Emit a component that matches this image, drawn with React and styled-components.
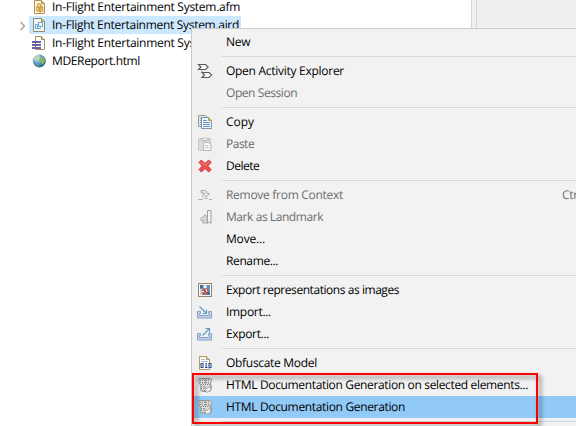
import React from 'react';
import styled, { createGlobalStyle } from 'styled-components';

const Global = createGlobalStyle`
  * { box-sizing: border-box; }
  body { margin: 0; overflow: hidden; }
`;

const Window = styled.div`
  position: relative;
  display: flex;
  width: 576px;
  height: 426px;
  overflow: hidden;
  background: #fff;
  color: #000;
  font: 12px/18px 'Open Sans', sans-serif;
  text-rendering: geometricPrecision;
`;

const Explorer = styled.div`
  width: 471px;
  margin-top: -2px;
`;

const Sash = styled.div`
  width: 6px;
  background: #f0f0f0;
  border: solid #d5d5d5;
  border-width: 0 1px;
`;

const Editor = styled.div`
  flex: 1;
  background: #efefef;
`;

const TreeRow = styled.div`
  display: flex;
  align-items: center;
  height: 18px;
  padding-left: 16px;
`;

const Twisty = styled.svg`
  width: 13px;
  height: 16px;
  flex: none;
`;

const TreeItem = styled.div`
  display: flex;
  align-items: center;
  height: 18px;
  padding: 0 2px;
  background: ${(p) => (p.$selected ? '#cce8ff' : 'transparent')};
`;

const Icon = styled.svg`
  display: block;
  flex: none;
  width: 16px;
  height: 16px;
`;

const Label = styled.span`
  display: block;
  white-space: nowrap;
  letter-spacing: ${(p) => p.$tracking}px;
`;

const TreeLabel = styled(Label)`
  margin-left: 5px;
`;

const Menu = styled.div`
  position: absolute;
  left: 191px;
  top: 28px;
  width: 420px;
  height: 420px;
  padding-top: 2px;
  background: linear-gradient(90deg, #f0f0f0 30px, #f2f2f2 30px);
  border: solid #cacaca;
  border-width: 1px 0 0 1px;
`;

const MenuRow = styled.div`
  display: flex;
  align-items: center;
  height: 22px;
  padding-left: 5px;
  color: ${(p) => (p.$disabled ? '#6d6d6d' : '#000')};
  background: ${(p) => (p.$active ? '#91c9f7' : 'transparent')};
`;

const IconSlot = styled.div`
  width: 29px;
  height: 16px;
`;

const Shortcut = styled(Label)`
  width: 49px;
  margin-left: auto;
`;

const Separator = styled.div`
  height: 7px;
  margin-left: 30px;
  padding-top: 3px;

  &::before {
    content: '';
    display: block;
    height: 1px;
    background: #d7d7d7;
  }
`;

const Callout = styled.div`
  position: absolute;
  left: 192px;
  top: 373px;
  width: 346px;
  height: 51px;
  border: 2px solid #fe0000;
  filter: drop-shadow(3px 3px 2px rgba(0, 0, 0, 0.5));
`;

const AfmIcon = () => (
  <Icon viewBox="0 0 16 16">
    <path d="M3.500 1.500h7l3 3v10h-10z" fill="#fff6e0" stroke="#b0935a" />
    <path d="M10.500 1.500v3h3" fill="#e8cf8c" stroke="#a88a48" />
    <path d="M5 8l2-4 3 1 2 3v4l-3 1.500-4-1.500z" fill="#dba950" />
    <circle cx="8" cy="6.500" r="1.500" fill="#f9e4b0" stroke="#bb8a3c" strokeWidth=".6" />
    <circle cx="6.700" cy="10" r="1.500" fill="#f6d896" stroke="#bb8a3c" strokeWidth=".6" />
    <path d="M9 9l3-1v4l-3 1z" fill="#e9bd69" stroke="#bb8a3c" strokeWidth=".6" />
  </Icon>
);

const AirdIcon = () => (
  <Icon viewBox="0 0 16 16">
    <path d="M2.500 1.500h8l3 3v10h-11z" fill="#eef7fd" stroke="#8f8a6c" />
    <path d="M10.500 1.500v3h3" fill="#e6c77b" stroke="#a68b4f" />
    <path d="M7.500 5.500h4v4h-4zM4.500 7.500h2v4h3v-1M4.500 7.500v4h3" fill="none" stroke="#6aa5c9" />
  </Icon>
);

const ModelIcon = () => (
  <Icon viewBox="0 0 16 16">
    <path d="M4.500 1.500h6l3 3v10h-9z" fill="#f8fbff" stroke="#a68b5b" />
    <path d="M10.500 1.500v3h3" fill="#e8cc86" stroke="#a68b4f" />
    <path d="M1 7h9M1 10h9M1 13h9" stroke="#6b60a6" strokeWidth="2" />
  </Icon>
);

const GlobeIcon = () => (
  <Icon viewBox="0 0 16 16">
    <defs>
      <radialGradient id="sea" cx=".35" cy=".3" r=".8">
        <stop offset="0" stopColor="#d3ebf7" />
        <stop offset=".5" stopColor="#5a9dca" />
        <stop offset="1" stopColor="#1b4e82" />
      </radialGradient>
    </defs>
    <circle cx="8.300" cy="8" r="6.500" fill="url(#sea)" />
    <path d="M3 5l3-3 3 .5-1 2-2 1.500-1 2-2-.5z" fill="#bcd5a2" />
    <path d="M9 5l3-1.500 2 3-1 3.500-2 1.500-1-3-2-1z" fill="#8fb562" />
    <path d="M4 9.500l3 1 .5 3-2.500-1z" fill="#69a37a" />
  </Icon>
);

const ActivityIcon = () => (
  <Icon viewBox="0 0 16 16">
    <path
      d="M1.500 1.500H8.500L11.200 4 8.500 6.500H1.500L4 4zM5 9.500H12L14.700 12 12 14.500H5L7.500 12z"
      fill="#fafafa"
      stroke="#595959"
      strokeWidth="1.100"
    />
    <path d="M5 6.500v3" stroke="#999" />
  </Icon>
);

const CopyIcon = () => (
  <Icon viewBox="0 0 16 16">
    <path d="M1.500 1.500h7l2 2v9h-9z" fill="#d9e8f3" stroke="#a39b78" />
    <path d="M3 4.500h2M3 6.500h2M3 8.500h2M3 10.500h2" stroke="#7fa3c8" />
    <path d="M4.500 3.500h7l3 3v8h-10z" fill="#eff7ff" stroke="#7895b1" />
    <path d="M11.500 3.500v3h3" fill="#e7c36e" stroke="#b89243" />
    <path d="M6 6.500h4M6 8.500h7M6 10.500h7M6 12.500h7" stroke="#6a93bf" />
  </Icon>
);

const PasteIcon = () => (
  <Icon viewBox="0 0 16 16">
    <rect x="1.500" y="2.500" width="12" height="12" rx="1" fill="#dcdcdc" stroke="#c4c4c4" />
    <path d="M4.500 4.500v-2h2l1-1h1l1 1h2v2z" fill="#eee" stroke="#b8b8b8" />
    <path d="M6.500 6.500h5l2.500 2v6H6.500z" fill="#f6f6f6" stroke="#b8b8b8" />
    <path d="M8 9.500h3M8 11.500h4" stroke="#c6c6c6" />
  </Icon>
);

const DeleteIcon = () => (
  <Icon viewBox="0 0 16 16">
    <path
      d="M2 4.500L4.300 2 8 5.500 11.700 2 14.200 4.500 10.700 8l3.500 3.500-2.500 2.500L8 10.500 4.300 14 2 11.500 5.300 8z"
      fill="#eb4c4c"
      stroke="#d23b40"
      strokeLinejoin="round"
    />
    <path d="M3.500 4.300l4.500 3L12.500 4" fill="none" stroke="#f58a80" />
  </Icon>
);

const RemoveContextIcon = () => (
  <Icon viewBox="0 0 16 16">
    <path
      d="M4 3.500h3.500q2.500 0 2.500 3h2.500L9 10.500 5.500 6.800h2Q7.500 5.500 4 5.500z"
      fill="#e6e6e6"
      stroke="#adadad"
    />
    <path d="M4.500 8.500l2 2" stroke="#adadad" />
    <path d="M1 12.500h5M12 12.500h3" stroke="#adadad" />
    <path d="M7 11.500h4" stroke="#c4c4c4" />
  </Icon>
);

const LandmarkIcon = () => (
  <Icon viewBox="0 0 16 16">
    <path d="M10.500 1.500h3.500v13l-1.700-2-1.800 2z" fill="#f6f6f6" stroke="#9f9f9f" />
    <path
      d="M4.500 8.500l3-1V5.500l2.500 2v6.500H5.500v-1.500l2-1.500-3 .5L3 10.500z"
      fill="#dedede"
      stroke="#adadad"
    />
  </Icon>
);

const ImageIcon = () => (
  <Icon viewBox="0 0 16 16">
    <rect x="1.500" y="1.500" width="13" height="13" fill="#fff8ec" stroke="#98836c" />
    <path d="M3 3h10v10H3z" fill="#5b94ca" />
    <path d="M3 3h4v3H3zM10 10h3v3h-3z" fill="#3c6ea8" />
    <path d="M3 7h3v6H3z" fill="#b9cfe2" />
    <path d="M5 8l2-2 3 .5 2 2-1 1.500-1-1 .5 4H9l-1-3-1 3H5.500z" fill="#bf5245" />
    <circle cx="8" cy="4.700" r="1.700" fill="#fff" />
    <path d="M9 7l1 3M5 9.500h2" stroke="#eef4f9" />
  </Icon>
);

const Tray = () => (
  <path
    d="M.500 7.500h3v2h-1v2h10v-2h-1v-2h3v6.500H.500z"
    fill="#c3d2e7"
    stroke="#86a0c8"
  />
);

const ImportIcon = () => (
  <Icon viewBox="0 0 16 16">
    <Tray />
    <path d="M2.500 2.500l7 7M9.500 5.500v4h-4" fill="none" stroke="#5d9cc7" strokeWidth="1.200" />
  </Icon>
);

const ExportIcon = () => (
  <Icon viewBox="0 0 16 16">
    <Tray />
    <path d="M5.500 9.500l7-7M8.500 2.500h4v4" fill="none" stroke="#5d9cc7" strokeWidth="1.200" />
  </Icon>
);

const ObfuscateIcon = () => (
  <Icon viewBox="0 0 16 16">
    <path d="M2.500 1.500h7l3 3v10h-10z" fill="#f9fbff" stroke="#b09a5c" />
    <path d="M9.500 1.500v3h3" fill="#ecd28d" stroke="#b09a5c" />
    <path d="M4 4.500h4M4 6.500h7" stroke="#a9bfdc" />
    <path d="M3 8h12v5H3z" fill="#f6f9fd" />
    <path
      d="M4 8.500h2v4H4zM8.500 8.500h.700v4M8 12.500h2.500M12 8.500h2v4h-2z"
      fill="none"
      stroke="#34508a"
      strokeWidth="1.100"
    />
  </Icon>
);

const ScrollIcon = () => (
  <Icon viewBox="0 0 16 16">
    <path
      d="M2 1.500h11.500q2 .5 1 2.500l-1 2 1 5-1.500 3.500H6q-2.500 0-2.500-2l.5-3-2-4z"
      fill="#dcdcdc"
      stroke="#9a9a9a"
    />
    <path d="M3 3.500h10M3 5.500h10M4 7.500h9M4 9.500h4M4 11.500h4M5 13.500h4" stroke="#868686" strokeDasharray="1 1" />
    <path d="M5.500 2v6M8.500 2v6M11.500 2v6" stroke="#9e9e9e" strokeDasharray="2 1" />
    <path d="M7.500 9.500l2.500 2 4-3-.5 4.500-2 2H9z" fill="#f3f3f3" stroke="#909090" strokeWidth=".8" />
  </Icon>
);

const files = [
  { label: 'In-Flight Entertainment System.afm', icon: AfmIcon, tracking: -0.276 },
  { label: 'In-Flight Entertainment System.aird', icon: AirdIcon, tracking: -0.3, selected: true },
  { label: 'In-Flight Entertainment Sys', icon: ModelIcon, tracking: -0.276 },
  { label: 'MDEReport.html', icon: GlobeIcon, tracking: -0.356 },
];

const groups = [
  [{ label: 'New', tracking: -0.3 }],
  [
    { label: 'Open Activity Explorer', icon: ActivityIcon, tracking: -0.276 },
    { label: 'Open Session', tracking: -0.43, disabled: true },
  ],
  [
    { label: 'Copy', icon: CopyIcon, tracking: -0.035 },
    { label: 'Paste', icon: PasteIcon, tracking: -0.5, disabled: true },
    { label: 'Delete', icon: DeleteIcon, tracking: -0.5 },
  ],
  [
    { label: 'Remove from Context', icon: RemoveContextIcon, tracking: -0.285, disabled: true, shortcut: 'Ctr' },
    { label: 'Mark as Landmark', icon: LandmarkIcon, tracking: -0.43, disabled: true },
    { label: 'Move...', tracking: -0.17 },
    { label: 'Rename...', tracking: -0.38 },
  ],
  [
    { label: 'Export representations as images', icon: ImageIcon, tracking: -0.444 },
    { label: 'Import...', icon: ImportIcon, tracking: -0.3 },
    { label: 'Export...', icon: ExportIcon, tracking: -0.35 },
  ],
  [
    { label: 'Obfuscate Model', icon: ObfuscateIcon, tracking: -0.298 },
    { label: 'HTML Documentation Generation on selected elements...', icon: ScrollIcon, tracking: -0.345 },
    { label: 'HTML Documentation Generation', icon: ScrollIcon, tracking: -0.339, active: true },
  ],
];

export default function App() {
  return (
    <Window>
      <Global />
      <Explorer>
        {files.map(({ label, icon: Glyph, tracking, selected }) => (
          <TreeRow key={label}>
            <Twisty viewBox="0 0 13 16">
              {selected && <path d="M4.500 5l4 4-4 4" fill="none" stroke="#a6a6a6" strokeWidth="1.500" />}
            </Twisty>
            <TreeItem $selected={selected}>
              <Glyph />
              <TreeLabel $tracking={tracking}>{label}</TreeLabel>
            </TreeItem>
          </TreeRow>
        ))}
      </Explorer>
      <Sash />
      <Editor />
      <Menu>
        {groups.map((group, index) => (
          <React.Fragment key={group[0].label}>
            {index > 0 && <Separator />}
            {group.map(({ label, icon: Glyph, tracking, disabled, active, shortcut }) => (
              <MenuRow key={label} $disabled={disabled} $active={active}>
                <IconSlot>{Glyph && <Glyph />}</IconSlot>
                <Label $tracking={tracking}>{label}</Label>
                {shortcut && <Shortcut $tracking={-0.3}>{shortcut}</Shortcut>}
              </MenuRow>
            ))}
          </React.Fragment>
        ))}
        <Separator />
      </Menu>
      <Callout />
    </Window>
  );
}
